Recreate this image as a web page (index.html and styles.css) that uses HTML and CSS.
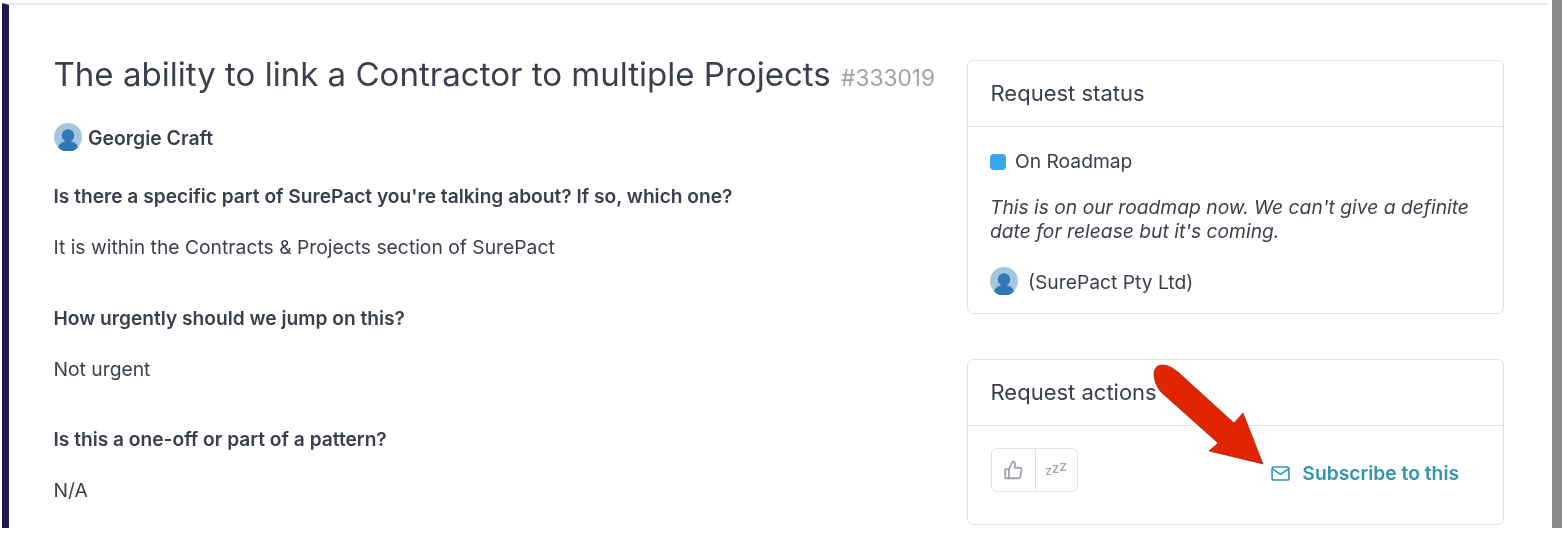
FILE: index.html
```html
<!DOCTYPE html>
<html lang="en">
<head>
<meta charset="utf-8">
<title>Request</title>
<link rel="stylesheet" href="styles.css">
</head>
<body>
<div class="viewport">
  <div class="panel">
    <main class="content">
      <h1 class="title">The ability to link a Contractor to multiple Projects <span class="ref">#333019</span></h1>
      <div class="author">
        <svg class="avatar" viewBox="0 0 28 28"><circle cx="14" cy="14" r="14" fill="#a6c6e0"/><circle cx="14" cy="12.500" r="6.300" fill="#2f78b5"/><path d="M4 24.500c1-4 5-6.500 10-6.500s9 2.500 10 6.500a14 14 0 0 1-20 0z" fill="#2f78b5"/></svg>
        <strong class="author-name">Georgie Craft</strong>
      </div>
      <section class="qa">
        <h3>Is there a specific part of SurePact you're talking about? If so, which one?</h3>
        <p>It is within the Contracts &amp; Projects section of SurePact</p>
      </section>
      <section class="qa">
        <h3>How urgently should we jump on this?</h3>
        <p>Not urgent</p>
      </section>
      <section class="qa">
        <h3>Is this a one-off or part of a pattern?</h3>
        <p>N/A</p>
      </section>
    </main>
    <aside class="side">
      <div class="card status-card">
        <div class="card-head">Request status</div>
        <div class="card-body">
          <div class="status"><span class="dot"></span>On Roadmap</div>
          <p class="note">This is on our roadmap now. We can't give a definite date for release but it's coming.</p>
          <div class="by">
            <svg class="avatar" viewBox="0 0 28 28"><circle cx="14" cy="14" r="14" fill="#a6c6e0"/><circle cx="14" cy="12.500" r="6.300" fill="#2f78b5"/><path d="M4 24.500c1-4 5-6.500 10-6.500s9 2.500 10 6.500a14 14 0 0 1-20 0z" fill="#2f78b5"/></svg>
            <span class="by-name">(SurePact Pty Ltd)</span>
          </div>
        </div>
      </div>
      <div class="card actions-card">
        <div class="card-head">Request actions</div>
        <div class="card-body actions">
          <div class="votes">
            <span class="vote">
              <svg viewBox="0 0 24 24" width="22" height="22" fill="none" stroke="#a0a3a9" stroke-width="2" stroke-linejoin="round" stroke-linecap="round"><path d="M7.500 11h-4v10h4z"/><path d="M7.500 11l4-8.500c1.500 0 2.500 1 2.500 2.500v4.500h5.500c1.200 0 2 1 1.800 2.200l-1.300 7.500c-.2 1-1 1.800-2 1.800H7.500"/></svg>
            </span>
            <span class="vote zzz"><i class="z1">z</i><i class="z2">z</i><i class="z3">z</i></span>
          </div>
          <a class="subscribe" href="#">
            <svg viewBox="0 0 20 16" width="19" height="15" fill="none" stroke="#2f97ad" stroke-width="1.700" stroke-linejoin="round"><rect x="1" y="1" width="18" height="14" rx="2"/><path d="M1.500 3l8.500 6 8.500-6"/></svg>
            Subscribe to this
          </a>
        </div>
      </div>
    </aside>
  </div>
  <div class="scrollbar"></div>
  <svg class="arrow" viewBox="0 0 120 112" width="120" height="112"><path d="M4 15C3.500 9 7 5 12 5c6 0 11 3 16 7l56 51 9-10 20 51-54-13 9-8-56-50C7 28 4.500 21 4 15z" fill="#e22400" stroke="#7a1a08" stroke-width=".6"/></svg>
</div>
</body>
</html>
```

FILE: styles.css
```css
* { box-sizing: border-box; }
html, body { margin: 0; padding: 0; background: #fff; }
body { font-family: Inter, "Liberation Sans", sans-serif; color: #3a3f4b; overflow: hidden; }
.viewport { position: relative; width: 1562px; height: 528px; display: flex; align-items: stretch; overflow: hidden; padding-left: 2px; filter: blur(.3px); }
.panel { flex: 0 0 1546px; height: 528px; margin-top: 3px; border-top: 2px solid #e6e6ee; border-left: 7px solid #1f1a4d; display: flex; overflow: hidden; }
.content { width: 958px; padding: 47px 0 0 44.500px; flex: none; }
.title { margin: 0; font-size: 33.050px; line-height: 44px; font-weight: 400; white-space: nowrap; color: #3a3f4b; }
.ref { font-size: 22.700px; color: #9fa3aa; margin-left: 1px; }
.author { display: flex; align-items: center; gap: 6.500px; margin-top: 23px; font-size: 19.400px; }
.author-name { font-weight: 600; padding-top: 2px; }
.avatar { width: 28px; height: 28px; flex: none; }
.qa h3 { margin: 0; font-size: 19.170px; line-height: 26px; font-weight: 600; }
.qa p { margin: 25px 0 0; font-size: 19.290px; line-height: 26px; }
.qa { margin-top: 44.500px; }
.author + .qa { margin-top: 32px; }
.side { width: 537px; flex: none; padding-top: 55px; }
.card { border: 1px solid #dfe1e8; border-radius: 6px; background: #fff; }
.actions-card { margin-top: 45px; height: 166px; }
.card-head { height: 66px; padding: 0 22.500px 2px; display: flex; align-items: center; font-size: 22px; border-bottom: 1px solid #dfe1e8; }
.card-body { padding: 22px 22px 18px; font-size: 19.250px; }
.status { display: flex; align-items: center; gap: 9px; line-height: 25px; }
.dot { width: 16px; height: 16px; border-radius: 4px; background: #36a6ee; }
.note { margin: 21px 0 0; font-style: italic; line-height: 24px; }
.by { display: flex; align-items: center; gap: 10px; margin-top: 24px; }
.by-name { padding-top: 2px; }
.actions { display: flex; align-items: center; justify-content: space-between; padding: 22px 44px 32px 22.500px; }
.votes { display: flex; height: 44px; border: 1px solid #dfe1e8; border-radius: 6px; }
.vote { width: 43px; display: flex; align-items: center; justify-content: center; }
.vote + .vote { width: 42.500px; border-left: 1px solid #dfe1e8; }
.zzz { color: #a0a3a9; align-items: flex-end; padding-bottom: 14px; font-weight: 500; }
.zzz i { font-style: normal; line-height: 1; }
.z1 { font-size: 12px; }
.z2 { font-size: 13px; position: relative; bottom: 2px; }
.z3 { font-size: 14px; position: relative; bottom: 4px; }
.subscribe { display: flex; align-items: center; gap: 12px; margin-top: 6px; font-weight: 600; color: #2f97ad; text-decoration: none; font-size: 19.250px; }
.scrollbar { position: absolute; left: 1552px; top: 0; width: 10px; height: 528px; background: #8a8a8a; }
.arrow { position: absolute; left: 1150px; top: 360px; }
```
